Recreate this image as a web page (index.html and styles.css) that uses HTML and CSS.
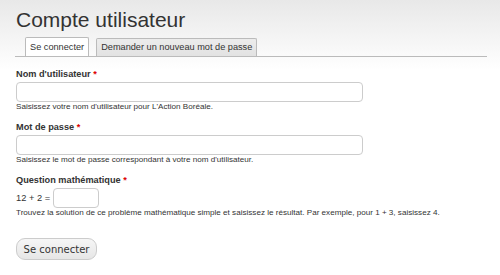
FILE: index.html
```html
<!DOCTYPE html>
<html lang="fr">
<head>
<meta charset="utf-8">
<title>Compte utilisateur</title>
<link rel="stylesheet" href="styles.css">
</head>
<body>
<div class="page">
  <h1 class="title">Compte utilisateur</h1>
  <ul class="tabs">
    <li class="tab tab-active">Se connecter</li>
    <li class="tab tab-other">Demander un nouveau mot de passe</li>
  </ul>
  <form class="form">
    <div class="field">
      <label class="label">Nom d'utilisateur <span class="req">*</span></label>
      <input class="input input-wide" type="text">
      <div class="desc">Saisissez votre nom d'utilisateur pour L'Action Boréale.</div>
    </div>
    <div class="field">
      <label class="label">Mot de passe <span class="req">*</span></label>
      <input class="input input-wide" type="password">
      <div class="desc">Saisissez le mot de passe correspondant à votre nom d'utilisateur.</div>
    </div>
    <div class="field">
      <label class="label">Question mathématique <span class="req">*</span></label>
      <div class="math-row"><span class="math-q">12 + 2 =</span><input class="input input-small" type="text"></div>
      <div class="desc">Trouvez la solution de ce problème mathématique simple et saisissez le résultat. Par exemple, pour 1 + 3, saisissez 4.</div>
    </div>
    <div class="actions">
      <button class="button" type="button">Se connecter</button>
    </div>
  </form>
</div>
</body>
</html>
```

FILE: styles.css
```css
html, body {
  margin: 0;
  padding: 0;
}
body {
  background: linear-gradient(#e8e8e8 0px, #ffffff 70px) no-repeat;
  background-color: #fff;
  font-family: "Liberation Sans", Arial, sans-serif;
  color: #333;
  height: 275px;
}
.page {
  padding: 8px 13px 0 15px;
}
.title {
  margin: 0 0 0 1px;
  font-size: 21px;
  line-height: 24px;
  font-weight: normal;
  color: #333;
}
.tabs {
  list-style: none;
  margin: 5px 0 0 0;
  padding: 0 0 0 10px;
  display: flex;
  align-items: flex-end;
  border-bottom: 1px solid #bbb;
}
.tab {
  font-size: 9.2px;
  line-height: 18px;
  height: 18px;
  padding: 0 4px;
  border: 1px solid #bbb;
  border-bottom: none;
  border-radius: 2px 2px 0 0;
  color: #333;
}
.tab-active {
  background: #fff;
}
.tab-other {
  margin-left: 7px;
  height: 17px;
  line-height: 17px;
  background: linear-gradient(#ececec, #e2e2e2);
}
.form {
  padding: 11px 0 0 1px;
}
.field {
  margin-bottom: 9px;
}
.label {
  display: block;
  font-size: 9.2px;
  line-height: 12px;
  font-weight: bold;
  margin-bottom: 2px;
}
.req {
  color: #d00;
}
.input {
  display: block;
  box-sizing: border-box;
  height: 20px;
  border: 1px solid #ccc;
  border-radius: 4px;
  background: #fff;
  margin: 0;
  padding: 0 4px;
}
.input-wide {
  width: 347px;
}
.input-small {
  width: 46px;
  margin-left: 3px;
}
.math-row {
  display: flex;
  align-items: center;
  margin-top: 1px;
}
.math-q {
  font-size: 9.3px;
}
.desc {
  font-size: 8.1px;
  line-height: 10px;
}
.actions {
  padding-top: 11px;
}
.button {
  box-sizing: border-box;
  height: 22px;
  width: 81px;
  padding: 0;
  font-family: "DejaVu Sans", sans-serif;
  font-size: 10px;
  color: #333;
  border: 1px solid #ccc;
  border-radius: 9px;
  background: linear-gradient(#f6f6f6, #e6e6e6);
}
```
